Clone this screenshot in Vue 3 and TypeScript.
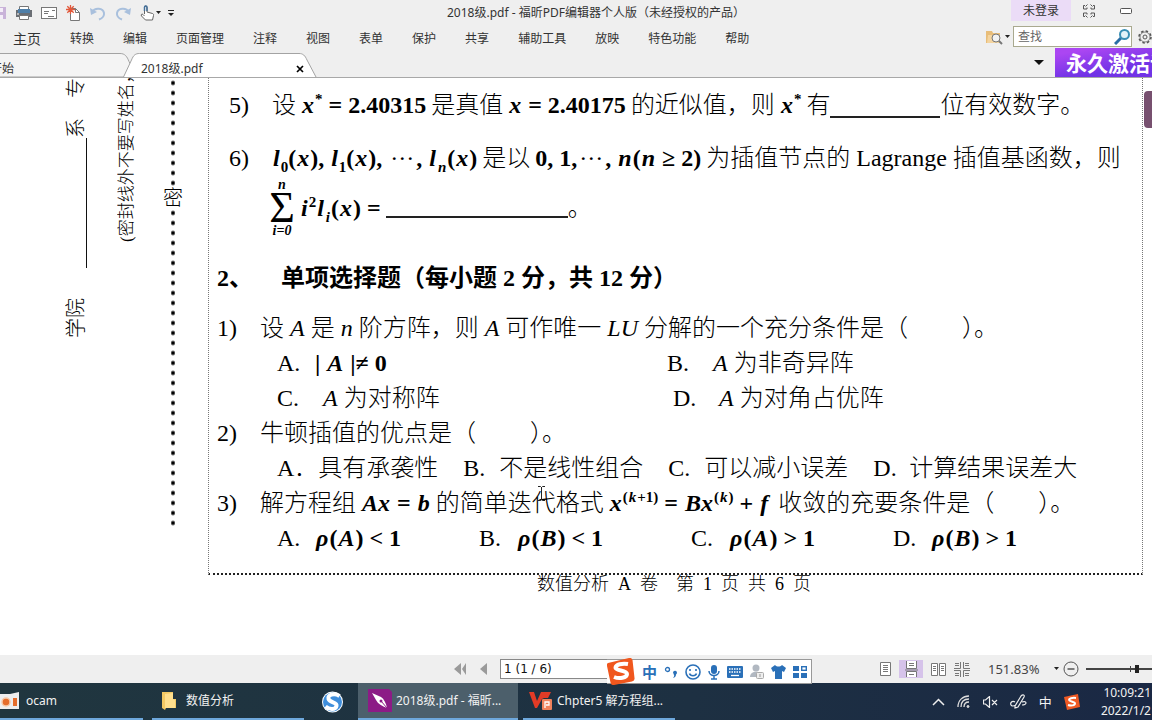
<script setup lang="ts">
const menus: string[] = ['转换', '编辑', '页面管理', '注释', '视图', '表单', '保护', '共享', '辅助工具', '放映', '特色功能', '帮助']
const page = '1 (1 / 6)'
const zoom = 79
const choices2 = [
  { label: 'A．', text: '具有承袭性' },
  { label: 'B.', text: '不是线性组合' },
  { label: 'C.', text: '可以减小误差' },
  { label: 'D.', text: '计算结果误差大' },
]
const choices3 = [
  { label: 'A.', m: 'A', op: '<' },
  { label: 'B.', m: 'B', op: '<' },
  { label: 'C.', m: 'A', op: '>' },
  { label: 'D.', m: 'B', op: '>' },
]
const footer = ['数值分析', 'A', '卷', '', '第', '1', '页', '共', '6', '页']
</script>

<template>
  <div class="app">
    <header class="chrome">
      <div class="titlebar">
        <div class="quick">
          <button class="save" aria-label="保存"><svg width="7" height="14" viewBox="0 0 7 14"><path d="M0 1h6v12H0z" fill="#c9b3d9" /><path d="M0 2h3v4H0zM0 9h3v4H0z" fill="#f4eef8" /></svg></button>
          <button aria-label="打印"><svg width="16" height="16" viewBox="0 0 16 16"><path d="M3.500 1.500h9v4h-9z" fill="#fff" stroke="#777" /><path d="M0 5h16v7H0z" fill="#6a6e74" /><path d="M2 4h12v4H2z" fill="#4f7fa8" /><path d="M3.500 10.500h9v4h-9z" fill="#fff" stroke="#777" /><path d="M1 9h2" stroke="#fff" /></svg></button>
          <button aria-label="邮件"><svg width="16" height="14" viewBox="0 0 16 14"><rect x=".5" y="1.500" width="15" height="11" fill="#fff" stroke="#777" /><path d="M3 5.500h5M3 7.500h4M11 4.500h3M7 10.500h6" stroke="#777" /></svg></button>
          <button aria-label="新建"><svg width="15" height="16" viewBox="0 0 15 16"><path d="M4.500 3.500h5l4 4v8h-9z" fill="#fff" stroke="#777" /><path d="M9.500 3.500v4h4" fill="none" stroke="#777" /><path d="M4.500 0v9M0 4.500h9M1.300 1.300l6.400 6.400M7.700 1.300L1.300 7.700" stroke="#e2583a" stroke-width="1.300" /></svg></button>
          <button aria-label="撤销"><svg width="16" height="15" viewBox="0 0 16 15"><path d="M2 6C5 1 13 2 14 7c.4 3-1 5-5 6.500" fill="none" stroke="#a9c0dd" stroke-width="2" /><path d="M0 2l1 7 6-3z" fill="#a9c0dd" /></svg></button>
          <button aria-label="重做"><svg width="16" height="15" viewBox="0 0 16 15"><path d="M14 6C11 1 3 2 2 7c-.4 3 1 5 5 6.500" fill="none" stroke="#a9c0dd" stroke-width="2" /><path d="M16 2l-1 7-6-3z" fill="#a9c0dd" /></svg></button>
          <button aria-label="手型工具"><svg width="21" height="16" viewBox="0 0 21 16"><path d="M4.500 9V2.200c0-1.600 2.500-1.600 2.500 0V7l5.500 1.500c1 .3 1.200 1 1 2l-1 4.500h-7L1.500 11c-1-1.500.5-2.500 1.500-1.500L4.500 11" fill="#fff" stroke="#666" /><path d="M4.500 6V2.200c0-1.600 2.500-1.600 2.500 0V6" fill="none" stroke="#447099" stroke-width="1.500" /><path d="M16 6h5l-2.500 3z" fill="#222" /></svg></button>
          <button class="more" aria-label="自定义"><svg width="6" height="8" viewBox="0 0 6 8"><path d="M0 1.500h6" stroke="#222" /><path d="M0 4h6L3 7z" fill="#222" /></svg></button>
        </div>
        <h1 class="title">2018级.pdf - 福昕PDF编辑器个人版（未经授权的产品）</h1>
        <button class="login">未登录</button>
        <button class="skin" aria-label="皮肤"><svg width="14" height="14" viewBox="0 0 14 14" fill="none" stroke="#555"><path d="M3 1.500H1.500V5H5V3.500M11 1.500h1.500V5H9V3.500M3 12.500H1.500V9H5v1.500M11 12.500h1.500V9H9v1.500M3.500 2.500l2-2M10.500 2.500l-2-2M3.500 11.500l2 2M10.500 11.500l-2 2" /></svg></button>
        <button class="min" aria-label="最小化"><svg width="12" height="6" viewBox="0 0 12 6"><rect x=".5" y=".5" width="11" height="5" rx="1" fill="#fff" stroke="#555" /></svg></button>
      </div>

      <nav class="menubar">
        <button class="home">主页</button>
        <button v-for="m in menus" :key="m">{{ m }}</button>
        <div class="find">
          <button aria-label="查找文件夹"><svg width="24" height="16" viewBox="0 0 24 16"><path d="M0 2h6l1 2h7v10H0z" fill="#e8bd79" /><path d="M2 6h12v8H1z" fill="#f4d49f" /><circle cx="10" cy="9" r="4" fill="#f2f2f2" stroke="#777" /><path d="M13 12l3 3" stroke="#777" stroke-width="2" /><path d="M19 6h5l-2.500 3z" fill="#222" /></svg></button>
          <label class="search">
            <input type="text" placeholder="查找" aria-label="查找" />
            <svg width="17" height="16" viewBox="0 0 17 16"><path d="M1 15l6-6" stroke="#2a6da6" stroke-width="3" /><circle cx="10.500" cy="5.500" r="4.500" fill="#e4f3f8" stroke="#3a8fb4" stroke-width="2" /></svg>
          </label>
          <button class="gear" aria-label="设置"><svg width="14" height="14" viewBox="0 0 14 14" fill="none" stroke="#555"><circle cx="7" cy="7" r="6" stroke-width="1.500" stroke-dasharray="2.500 2.200" /><circle cx="7" cy="7" r="5" stroke-width=".7" /><circle cx="7" cy="7" r="2" /></svg></button>
        </div>
      </nav>

      <div class="tabs">
        <svg class="tabshape" width="320" height="24" viewBox="0 0 320 24"><path d="M-1 .5h121c5 0 7 3 9 8l4 8-5 7.500H-1z" fill="#f4f4f4" stroke="#a3a3a3" /><path d="M123.500 24l8-17c2-5 4-6.500 8-6.500H299c4 0 6 2 8 6.500l9 17" fill="#fff" stroke="#a3a3a3" /></svg>
        <button class="start">开始</button>
        <button class="current">2018级.pdf</button>
        <button class="close" aria-label="关闭"><svg width="8" height="8" viewBox="0 0 8 8"><path d="M1 1l6 6M7 1L1 7" stroke="#000" stroke-width="1.700" /></svg></button>
        <button class="tablist" aria-label="标签列表"><svg width="10" height="5" viewBox="0 0 10 5"><path d="M0 0h10L5 5z" fill="#111" /></svg></button>
        <a class="banner" href="#activate">永久激活请</a>
      </div>
    </header>

    <main class="viewer">
      <aside class="margin">
        <div class="vert fields"><span>学院</span><i class="fill"></i><span>系</span><span class="major">专业</span></div>
        <div class="vert note">(密封线外不要写姓名，</div>
        <div class="seal"><i class="dots upper"></i><span>密</span><i class="dots lower"></i></div>
      </aside>

      <div class="sheet">
        <section class="paper">
          <div class="row first">
            <span class="num">5)</span>
            <span>设</span>
            <b class="math"><i>x</i><sup>*</sup> = 2.40315</b>
            <span>是真值</span>
            <b class="math"><i>x</i> = 2.40175</b>
            <span>的近似值，则</span>
            <b class="math"><i>x</i><sup>*</sup></b>
            <span class="join">有<u class="blank short"></u>位有效数字。</span>
          </div>
          <div class="row second">
            <span class="num">6)</span>
            <b class="math"><i>l</i><sub>0</sub>(<i>x</i>), <i>l</i><sub>1</sub>(<i>x</i>), <span class="dot3">···</span>, <i>l</i><sub><i>n</i></sub>(<i>x</i>)</b>
            <span>是以</span>
            <b class="math">0, 1,<span class="dot3">···</span>, <i>n</i>(<i>n</i> ≥ 2)</b>
            <span>为插值节点的 Lagrange 插值基函数，则</span>
          </div>
          <div class="row sumrow">
            <b class="sum"><i>n</i><span>Σ</span><i>i=0</i></b>
            <b class="math"><i>i</i><sup>2</sup><i>l</i><sub><i>i</i></sub>(<i>x</i>) =</b>
            <span class="join"><u class="blank long"></u>。</span>
          </div>
          <h2 class="heading"><span>2、</span><span>单项选择题（每小题 2 分，共 12 分）</span></h2>

          <div class="row"><span class="num">1)</span><span>设 <i>A</i> 是 <i>n</i> 阶方阵，则 <i>A</i> 可作唯一 <i>LU</i> 分解的一个充分条件是（<i class="answer"></i>）。</span></div>
          <div class="options two">
            <span class="opt"><span>A.</span><b class="math">| <i>A</i> |≠ 0</b></span>
            <span class="opt wide"><span>B.</span><span><i>A</i> 为非奇异阵</span></span>
          </div>
          <div class="options two later">
            <span class="opt wide"><span>C.</span><span><i>A</i> 为对称阵</span></span>
            <span class="opt wide"><span>D.</span><span><i>A</i> 为对角占优阵</span></span>
          </div>
          <div class="row"><span class="num">2)</span><span>牛顿插值的优点是（<i class="answer"></i>）。</span></div>
          <div class="options flow">
            <span v-for="c in choices2" :key="c.label" class="opt"><span>{{ c.label }}</span><span>{{ c.text }}</span></span>
          </div>
          <div class="row">
            <span class="num">3)</span>
            <span>解方程组</span>
            <b class="math"><i>Ax</i> = <i>b</i></b>
            <span>的简单迭代格式</span>
            <b class="math"><i>x</i><sup>(<i>k</i>+1)</sup> = <i>Bx</i><sup>(<i>k</i>)</sup> + <i>f</i></b>
            <span class="after">收敛的充要条件是（<i class="answer tight"></i>）。</span>
          </div>
          <div class="options four">
            <span v-for="c in choices3" :key="c.label" class="opt"><span>{{ c.label }}</span><b class="math"><i>ρ</i>(<i>{{ c.m }}</i>) {{ c.op }} 1</b></span>
          </div>
          <svg class="ibeam" width="7" height="15" viewBox="0 0 7 15"><path d="M0 .5h2.500l1 1 1-1H7M3.500 1v13M0 14.500h2.500l1-1 1 1H7" fill="none" stroke="#222" /></svg>
        </section>
        <footer class="pagefoot"><span v-for="(t, i) in footer" :key="i">{{ t }}</span></footer>
      </div>
      <div class="thumb"></div>
    </main>

    <div class="status">
      <div class="pager">
        <button aria-label="首页"><svg width="14" height="12" viewBox="0 0 14 12"><path d="M7 0v12L0 6zM12 0v12L8 6z" fill="#9a9a9a" /></svg></button>
        <button aria-label="上一页"><svg width="8" height="12" viewBox="0 0 8 12"><path d="M7 0v12L0 6z" fill="#9a9a9a" /></svg></button>
        <input type="text" :value="page" aria-label="页码" />
      </div>
      <div class="views">
        <button aria-label="单页"><svg width="11" height="14" viewBox="0 0 11 14" fill="#fff" stroke="#777"><path d="M.5.5h10v13H.5zM3 3.500h5M3 5.500h5M3 7.500h5M3 9.500h5" /></svg></button>
        <button class="on" aria-label="连续"><svg width="13" height="16" viewBox="0 0 13 16" fill="#fff" stroke="#777"><path d="M1.500 0v7.500h10V0M1.500 16v-5.500h10V16M4 2.500h5M4 4.500h5M4 13.500h5M0 9h13" /></svg></button>
        <button aria-label="双页"><svg width="15" height="13" viewBox="0 0 15 13" fill="#fff" stroke="#777"><path d="M.5.5h6v12h-6zM8.500.5h6v12h-6zM2 3.500h3M2 5.500h3M2 7.500h3M10 3.500h3M10 5.500h3M10 7.500h3" /></svg></button>
        <button aria-label="连续双页"><svg width="16" height="15" viewBox="0 0 16 15" fill="none" stroke="#777"><path d="M0 6.500h6.500V0M9.500 0v6.500H16M0 8.500h6.500V15M9.500 15V8.500H16M1 1.500h4M1 3.500h4M11 1.500h4M11 3.500h4M1 11.500h4M1 13.500h4M11 11.500h4M11 13.500h4" /></svg></button>
      </div>
      <span class="percent">151.83%</span>
      <button aria-label="缩放比例"><svg width="5" height="4" viewBox="0 0 5 4"><path d="M0 0h5L2.500 3z" fill="#222" /></svg></button>
      <button class="minus" aria-label="缩小"><svg width="16" height="16" viewBox="0 0 16 16" fill="none" stroke="#555"><circle cx="8" cy="8" r="7" /><path d="M4.500 8h7" stroke-width="1.500" /></svg></button>
      <input class="slider" type="range" min="0" max="100" :value="zoom" aria-label="缩放" />

      <div class="ime">
        <svg width="28" height="27" viewBox="0 0 28 27"><path d="M1 5L22 0q3-.5 3.500 2l2 18q.5 3-2.500 3.500L7 27q-3 .5-3.500-2.500L0 8q-.5-2.500 1-3z" fill="#f0571e" /><path d="M21 6c-6-1-12 .5-12.500 3.500C8 13 20 12 20 16s-8 5-13 3" fill="none" stroke="#fff" stroke-width="4" /></svg>
        <button class="cn">中</button>
        <button aria-label="标点"><svg width="14" height="14" viewBox="0 0 14 14"><circle cx="3.500" cy="4.500" r="2" fill="none" stroke="#2a70b8" stroke-width="1.300" /><path d="M9 7.500a2 2 0 1 1 3 2c0 2-1 3-3 3.500 1-1 1.500-2 1-3z" fill="#2a70b8" /></svg></button>
        <button aria-label="表情"><svg width="16" height="16" viewBox="0 0 16 16" fill="none" stroke="#2a70b8" stroke-width="1.600"><circle cx="8" cy="8" r="7" /><path d="M5 5v2M11 5v2M4.500 9.500c1 3 6 3 7 0" /></svg></button>
        <button aria-label="语音"><svg width="12" height="16" viewBox="0 0 12 16"><rect x="3" y="1" width="6" height="9" rx="3" fill="#2a70b8" /><path d="M1 7c0 6 10 6 10 0M6 11v4M3 15h6" fill="none" stroke="#2a70b8" stroke-width="1.500" /></svg></button>
        <button aria-label="键盘"><svg width="16" height="12" viewBox="0 0 16 12"><rect width="16" height="12" rx="1" fill="#2a70b8" /><path d="M2 3h12M2 6h12" stroke="#fff" stroke-width="1.500" stroke-dasharray="1.500 1" /><path d="M4 9.500h8" stroke="#fff" stroke-width="1.300" /></svg></button>
        <button aria-label="用户"><svg width="14" height="15" viewBox="0 0 14 15"><circle cx="6" cy="4" r="3.500" fill="#b1b8c1" /><path d="M0 13c0-7 12-7 12 0z" fill="#b1b8c1" /><rect x="6.500" y="8.500" width="7" height="6" rx="1" fill="#eee" stroke="#aaa" /><path d="M10 10v3" stroke="#999" /></svg></button>
        <button aria-label="换肤"><svg width="15" height="14" viewBox="0 0 15 14"><path d="M4 0c2 2 5 2 7 0l4 3-2 4-2-1v8H4V6L2 7 0 3z" fill="#2a70b8" /></svg></button>
        <button aria-label="工具箱"><svg width="14" height="14" viewBox="0 0 14 14"><path d="M0 1h6v5H0zM0 8h6v5H0zM8 8h6v5H8z" fill="#2a70b8" /><rect x="8.700" y="1.700" width="4.600" height="3.600" fill="none" stroke="#2a70b8" stroke-width="1.400" /></svg></button>
      </div>
    </div>

    <div class="taskbar">
      <button class="task ocam"><svg width="20" height="17" viewBox="0 0 20 17"><path d="M0 2h10l9-2v17H0z" fill="#eee" /><circle cx="6" cy="10" r="4" fill="#e56d2b" stroke="#f7c9a8" stroke-width="1.500" /><path d="M13 6h4v8h-4z" fill="#e56d2b" /></svg><span>ocam</span></button>
      <button class="task folder"><svg width="15" height="18" viewBox="0 0 15 18"><path d="M0 0h11v7h3v9H4l-1 2-3-2z" fill="#f3c964" /><path d="M3 2l8-1v6l2 1v8H3z" fill="#ffdf8d" /></svg><span>数值分析</span></button>
      <button class="task sogou" aria-label="搜狗浏览器"><svg width="23" height="22" viewBox="0 0 23 22"><circle cx="11.500" cy="11" r="10.500" fill="#fff" /><circle cx="11.500" cy="11" r="9.500" fill="#3f8edb" /><path d="M18.500 5C13 1.500 6 4 7.500 8s9 3 8 7-7 4-11 .5" fill="none" stroke="#fff" stroke-width="4" /></svg></button>
      <button class="task foxit"><svg width="24" height="23" viewBox="0 0 24 23"><path d="M0 0h21l3 3v20H0z" fill="#8c1b86" /><path d="M4 4l9 4c3 2 5 6 6 11-5-2-9-4-11-8z" fill="#fff" /><path d="M13 12l6 7" stroke="#8c1b86" /><circle cx="13" cy="12" r="1.500" fill="#8c1b86" /></svg><span>2018级.pdf - 福昕...</span></button>
      <button class="task wps"><svg width="24" height="20" viewBox="0 0 24 20"><path d="M0 1h5l3 9 4-9h10l-3 6h-4l-2 1-5 9H6z" fill="#e33b26" /><rect x="13" y="8" width="10" height="11" rx="1" fill="#f0825c" /><path d="M16 17v-6h4v3h-3" fill="none" stroke="#fff" stroke-width="1.300" /></svg><span>Chpter5 解方程组...</span></button>
      <div class="tray">
        <button aria-label="显示隐藏的图标"><svg width="13" height="8" viewBox="0 0 13 8"><path d="M1 7l5.500-5.500L12 7" fill="none" stroke="#eee" stroke-width="1.500" /></svg></button>
        <button aria-label="网络"><svg width="14" height="14" viewBox="0 0 14 14" fill="none" stroke="#ddd"><path d="M1 12C1 5 6 1 12 1M4 12c0-5 3-8 8-8M7 12c0-3 2-5 5-5" stroke-width="1.300" /><circle cx="11" cy="11.500" r="1" fill="#ddd" /></svg></button>
        <button aria-label="音量"><svg width="15" height="12" viewBox="0 0 15 12" fill="none" stroke="#eee"><path d="M.5 4h2l4-3.500v11L2.500 8h-2zM9 4l5 5M14 4L9 9" stroke-width="1.200" /></svg></button>
        <button class="pen" aria-label="手写"><svg width="17" height="15" viewBox="0 0 17 15" fill="none" stroke="#eee" stroke-width="1.200"><path d="M5 12L11 2c2-2 4-1 3 1L8 13l-3 1zM5 8C2 6 0 9 1 11c1 2 3 1 5 0M12 8c3-1 4 0 4 1s-2 2-4 2" /></svg></button>
        <button class="lang">中</button>
        <button aria-label="搜狗输入法"><svg width="16" height="16" viewBox="0 0 16 16"><path d="M0 3l14-3 2 13-13 3z" fill="#f05a24" /><path d="M12 4c-4-.5-7 .5-7 2s6 1.500 6 3.500-4 2.500-7 1.500" fill="none" stroke="#fff" stroke-width="2" /></svg></button>
        <time class="clock">10:09:21<br />2022/1/2</time>
      </div>
    </div>
  </div>
</template>

<style>
body { margin: 0; overflow: hidden; }
</style>

<style scoped>
.app { height: 100vh; display: flex; flex-direction: column; overflow: hidden; background: #fff; font: 12px/16px "Noto Sans", "Noto Sans CJK SC", sans-serif; color: #333; }
button { border: 0; padding: 0; margin: 0; background: none; font: inherit; color: inherit; flex: none; white-space: nowrap; display: flex; align-items: center; }
svg { display: block; flex: none; }
.chrome { background: #efefef; border-bottom: 1px solid #a8a8a8; }

.titlebar { height: 26px; display: flex; align-items: center; }
.quick { width: 447px; flex: none; display: flex; align-items: center; gap: 9px; }
.quick .more { margin-left: -2px; }
.title { margin: 0; font: inherit; white-space: nowrap; }
.login { margin-left: auto; align-self: flex-start; height: 21px; width: 60px; justify-content: center; background: #ebdcf7; }
.skin { margin-left: 11px; align-self: flex-start; height: 21px; }
.min { margin: 0 20px 0 24px; align-self: flex-start; height: 21px; }

.menubar { height: 22px; display: flex; align-items: center; gap: 29px; padding-left: 13px; }
.menubar > button { padding-top: 4px; }
.home { font-size: 14px; }
.find { margin-left: auto; display: flex; align-items: center; gap: 3px; align-self: flex-start; height: 21px; }
.search { display: flex; align-items: center; width: 119px; height: 21px; box-sizing: border-box; border: 1px solid #a9a98f; background: #fff; }
.search input { flex: 1; min-width: 0; border: 0; outline: 0; padding: 0 4px; background: none; font: inherit; color: #555; }
.search input::placeholder { color: #666; }
.gear { margin-left: 3px; }

.tabs { position: relative; height: 29px; display: flex; align-items: flex-end; overflow: hidden; }
.tabshape { position: absolute; left: 0; bottom: 0; }
.tabs button { position: relative; height: 16px; }
.start { width: 141px; text-indent: -10px; }
.current { width: 155px; }
.tabs .tablist { margin-left: auto; margin-right: 11px; align-self: center; }
.banner { box-sizing: border-box; width: 97px; height: 29px; flex: none; overflow: hidden; padding-left: 11px; white-space: nowrap; color: #fff; text-decoration: none; font: 700 21px/28px "Noto Sans CJK SC", sans-serif; background: linear-gradient(170deg, #ab46f2 15%, #7133e6 70%); }

.viewer { position: relative; flex: 1; min-height: 0; display: flex; overflow: hidden; background: #fff; color: #000; font: 300 24px/35px "Liberation Serif", "Noto Sans CJK SC", serif; }
.margin { width: 208px; flex: none; display: flex; align-items: flex-start; }
.vert { writing-mode: vertical-rl; text-orientation: sideways; transform: rotate(180deg); white-space: nowrap; display: flex; overflow: hidden; }
.vert > * { flex: none; }
.fields { height: 260px; margin-left: 65px; font-size: 20px; line-height: 22px; }
.fill { height: 130px; margin-top: 30px; border-left: 1px solid #111; width: 21px; }
.major { margin-top: 20px; }
.note { height: 164px; margin-left: 29px; font-size: 17px; line-height: 22px; }
.seal { margin-left: 25px; width: 20px; display: flex; flex-direction: column; align-items: center; font-size: 20px; line-height: 20px; }
.dots { width: 4px; background: radial-gradient(circle at 2px 5px, #000 0 1px, transparent 3px) 0 0 / 4px 10px; }
.upper { height: 110px; }
.lower { height: 320px; }

.sheet { flex: 1; min-width: 0; }
.paper { position: relative; margin-right: 9px; padding-bottom: 17px; border: 1px dotted #777; border-top: 0; border-bottom: 2px dotted #222; }
.row { height: 35px; display: flex; align-items: baseline; padding-left: 8px; gap: 5px; white-space: nowrap; }
.num { width: 38px; flex: none; }
.first, .second { padding-left: 20px; }
.first { height: 54px; line-height: 54px; }
.second { height: 52px; line-height: 52px; }
.sumrow { height: 48px; padding-left: 60px; align-items: center; }
.join { display: flex; align-items: baseline; }
.blank { border-bottom: 2px solid #222; text-decoration: none; }
.short { width: 110px; align-self: center; height: 24px; }
.long { width: 182px; align-self: center; height: 18px; }
.math { font-weight: 700; white-space: nowrap; }
.math i { margin: 0 1px; }
.dot3 { font-weight: 400; margin: 0 2px; }
sup, sub { font-size: 15px; line-height: 0; }
sup { vertical-align: 9px; }
sub { vertical-align: -6px; }
.sum { display: flex; flex-direction: column; align-items: center; width: 26px; font-weight: 700; font-size: 14px; line-height: 12px; }
.sum span { font-weight: 400; font-size: 44px; line-height: 34px; }
.heading { margin: 13px 0 0; height: 66px; padding-left: 8px; display: flex; font: 700 24px/66px "Liberation Serif", "Noto Sans CJK SC", serif; white-space: nowrap; }
.heading span:first-child { width: 64px; }
.answer { display: inline-block; width: 54px; }
.tight { width: 44px; }
.after { margin-left: 4px; }
.options { height: 35px; padding-left: 68px; white-space: nowrap; }
.two { display: grid; grid-template-columns: 390px 1fr; }
.later { grid-template-columns: 396px 1fr; }
.four { display: grid; grid-template-columns: 202px 212px 202px 1fr; }
.flow { display: flex; gap: 25px; }
.opt { display: flex; align-items: baseline; }
.opt > span:first-child { min-width: 38px; }
.wide > span:first-child { min-width: 46px; }
.flow .opt > span:first-child { min-width: 36px; }
.ibeam { position: absolute; left: 329px; top: 408px; }
.pagefoot { display: flex; gap: 9px; padding-left: 329px; font-size: 18px; line-height: 18px; white-space: nowrap; }
.thumb { position: absolute; right: 0; top: 13px; width: 8px; height: 37px; background: #77506f; border-radius: 4px 0 0 4px; }

.status { position: relative; flex: none; height: 28px; display: flex; align-items: center; background: #efefef; font-size: 13px; color: #444; }
.pager { display: flex; align-items: center; gap: 12px; padding-left: 454px; }
.pager input { width: 118px; height: 20px; box-sizing: border-box; border: 1px solid #888; padding: 0 3px; font: 12px "DejaVu Sans", sans-serif; color: #111; background: #fff; }
.views { margin-left: auto; display: flex; align-items: center; gap: 8px; }
.views .on { width: 24px; height: 18px; justify-content: center; background: #d6c3ea; }
.percent { margin-left: 18px; width: 66px; }
.minus { margin: 0 7px 0 4px; }
.slider { appearance: none; width: 66px; height: 16px; margin: 0; background: linear-gradient(#444, #444) 44px 5px / 1px 6px no-repeat, linear-gradient(#444, #444) 0 7px / 100% 2px no-repeat; }
.slider::-webkit-slider-thumb { appearance: none; width: 4px; height: 8px; background: #222; }
.ime { position: absolute; left: 607px; top: 4px; display: flex; align-items: center; gap: 7px; height: 23px; border: 1px solid #999; border-left: 0; background: #fff; padding-right: 4px; color: #2a70b8; }
.cn { font: 700 15px "Noto Sans CJK SC", sans-serif; }

.taskbar { flex: none; height: 37px; display: flex; background: linear-gradient(90deg, #20363f, #1d3042 60%, #1a2844); color: #f2f2f2; }
.task { height: 37px; box-sizing: border-box; border-bottom: 2px solid #6ea8dc; }
.ocam { width: 143px; gap: 6px; }
.folder { width: 152px; margin-left: 9px; padding-left: 10px; gap: 9px; }
.sogou { width: 42px; margin-left: 12px; padding-left: 5px; border: 0; }
.foxit { width: 160px; padding-left: 10px; gap: 4px; background: #4c5f6b; }
.wps { width: 152px; margin-left: 5px; padding-left: 6px; gap: 4px; }
.tray { margin-left: auto; display: flex; align-items: center; gap: 12px; padding-right: 1px; white-space: nowrap; }
.lang { font-size: 13px; }
.clock { line-height: 18px; text-align: right; margin-left: 9px; }
</style>
